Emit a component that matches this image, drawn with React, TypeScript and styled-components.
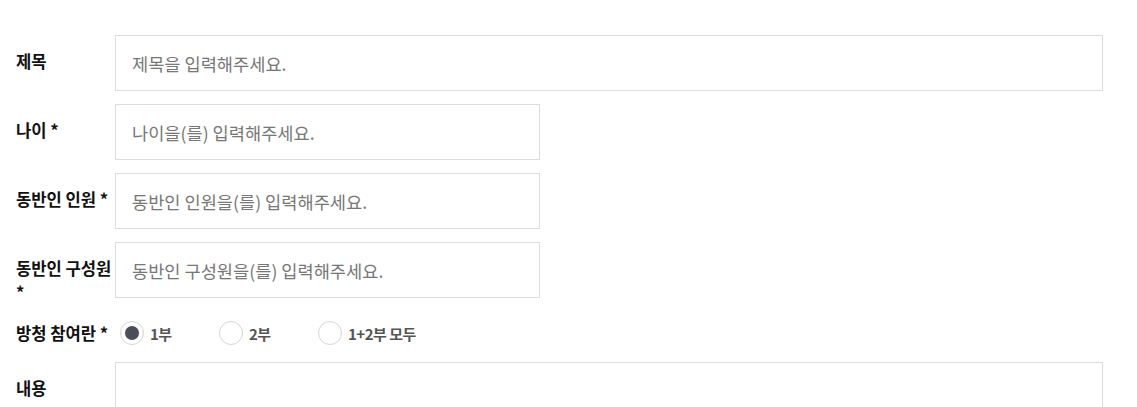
import styled, { createGlobalStyle } from "styled-components";
import { useState } from "react";

const GlobalStyle = createGlobalStyle`
  body {
    margin: 0;
    background: #fff;
    font-family: "Noto Sans CJK KR", "Noto Sans", sans-serif;
  }
`;

const Form = styled.form`
  display: flex;
  flex-flow: column;
  row-gap: 13px;
  padding: 35px 34px 0 16px;
`;

const Row = styled.div<{ $center?: boolean }>`
  display: flex;
  align-items: ${(p) => (p.$center ? "center" : "flex-start")};
  min-height: ${(p) => (p.$center ? "32px" : "auto")};
`;

const Label = styled.label<{ $center?: boolean }>`
  flex: 0 0 99px;
  box-sizing: border-box;
  padding-top: ${(p) => (p.$center ? "0" : "14px")};
  font-size: 16.6px;
  font-weight: 700;
  line-height: 24px;
  color: #111;
  word-break: keep-all;
`;

const Input = styled.input<{ $short?: boolean }>`
  box-sizing: border-box;
  width: ${(p) => (p.$short ? "425px" : "100%")};
  flex: ${(p) => (p.$short ? "0 0 425px" : "1 1 auto")};
  height: 56px;
  padding: 0 16px;
  border: 1px solid #dddddd;
  border-radius: 0;
  outline: none;
  font-family: inherit;
  font-size: 17.6px;
  color: #333;

  &::placeholder {
    color: #777;
  }
`;

const TextArea = styled.textarea`
  box-sizing: border-box;
  flex: 1 1 auto;
  height: 140px;
  padding: 14px 16px;
  border: 1px solid #dddddd;
  border-radius: 0;
  outline: none;
  resize: none;
  font-family: inherit;
  font-size: 17.6px;
`;

const RadioGroup = styled.div`
  display: flex;
  align-items: center;
  padding-left: 5px;
`;

const RadioOption = styled.label`
  display: flex;
  align-items: center;
  width: 99px;
  gap: 6px;
  font-size: 15px;
  font-weight: 700;
  color: #555;
  letter-spacing: -0.5px;
  cursor: pointer;
`;

const Circle = styled.span<{ $checked: boolean }>`
  position: relative;
  box-sizing: border-box;
  width: 24px;
  height: 24px;
  border-radius: 50%;
  border: 1px solid #d6d6d6;
  background: #fff;

  &::after {
    content: "";
    display: ${(p) => (p.$checked ? "block" : "none")};
    position: absolute;
    left: 4px;
    top: 4px;
    width: 14px;
    height: 14px;
    border-radius: 50%;
    background: #4b4e56;
  }
`;

const HiddenRadio = styled.input`
  display: none;
`;

const fields = [
  { id: "title", label: "제목", placeholder: "제목을 입력해주세요.", short: false },
  { id: "age", label: "나이 *", placeholder: "나이을(를) 입력해주세요.", short: true },
  { id: "count", label: "동반인 인원 *", placeholder: "동반인 인원을(를) 입력해주세요.", short: true },
  { id: "members", label: "동반인 구성원 *", placeholder: "동반인 구성원을(를) 입력해주세요.", short: true },
];

const sessions = ["1부", "2부", "1+2부 모두"];

export default function App() {
  const [session, setSession] = useState("1부");

  return (
    <>
      <GlobalStyle />
      <Form onSubmit={(e) => e.preventDefault()}>
        {fields.map((f) => (
          <Row key={f.id}>
            <Label htmlFor={f.id}>{f.label}</Label>
            <Input id={f.id} $short={f.short} placeholder={f.placeholder} />
          </Row>
        ))}

        <Row $center>
          <Label $center>방청 참여란 *</Label>
          <RadioGroup>
            {sessions.map((s) => (
              <RadioOption key={s}>
                <HiddenRadio
                  type="radio"
                  name="session"
                  checked={session === s}
                  onChange={() => setSession(s)}
                />
                <Circle $checked={session === s} />
                {s}
              </RadioOption>
            ))}
          </RadioGroup>
        </Row>

        <Row>
          <Label htmlFor="content">내용</Label>
          <TextArea id="content" />
        </Row>
      </Form>
    </>
  );
}
